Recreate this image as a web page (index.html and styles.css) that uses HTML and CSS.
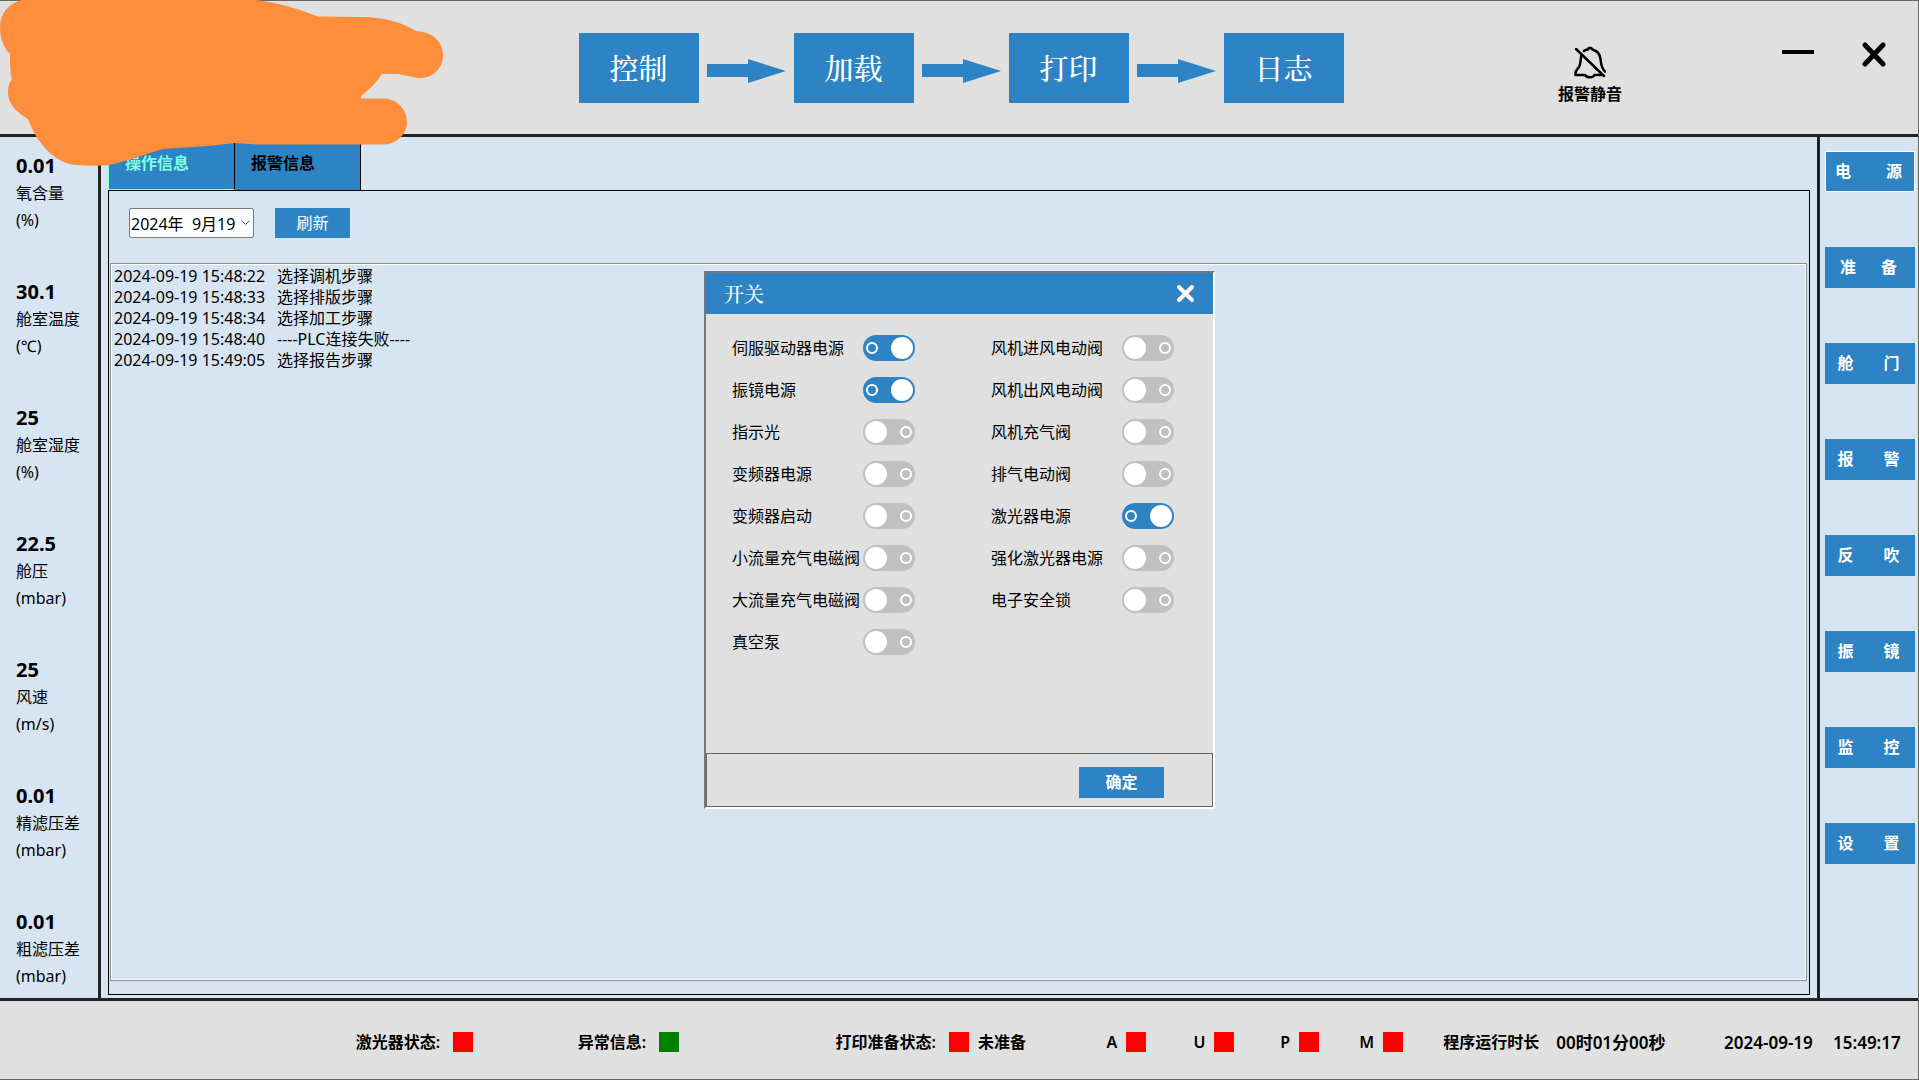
FILE: index.html
```html
<!DOCTYPE html>
<html lang="zh-CN">
<head>
<meta charset="utf-8">
<title>设备控制</title>
<link rel="stylesheet" href="styles.css">
</head>
<body>
<div class="app">
  <header class="header">
    <svg class="cover" width="444" height="167" viewBox="0 0 444 167" aria-hidden="true">
      <path d="M22 0C8 3 0 14 0 27C0 39 4 48 10 54C10 64 10 73 12 79C8 84 8 89 8 94C9 106 18 113 28 119C36 141 53 163 76 165C88 166 101 166 109 165C124 162 143 155 163 149L208 146L235 143L258 144.500L384 144.500C397 144 407 134 407 122C407 109 397 99 384 98.500L361 98.500V96C370 89 377 82 382 74L398 74L418 78C432 79 443 69 443 55C443 42 433 32 416 31C401 22 384 17 361 17L318 16.500C299 9 279 3 256 0Z"/>
    </svg>
    <nav class="steps">
      <button class="step" type="button">控制</button>
      <svg class="arrow" width="79" height="24" viewBox="0 0 79 24" aria-hidden="true"><path d="M0 5H41V0L79 12L41 24V18H0Z"/></svg>
      <button class="step" type="button">加载</button>
      <svg class="arrow" width="79" height="24" viewBox="0 0 79 24" aria-hidden="true"><path d="M0 5H41V0L79 12L41 24V18H0Z"/></svg>
      <button class="step" type="button">打印</button>
      <svg class="arrow" width="79" height="24" viewBox="0 0 79 24" aria-hidden="true"><path d="M0 5H41V0L79 12L41 24V18H0Z"/></svg>
      <button class="step" type="button">日志</button>
    </nav>
    <div class="tools">
      <button class="mute" type="button">
        <svg width="32" height="33" viewBox="0 0 32 33" fill="none" stroke="#000" stroke-width="2.500" stroke-linecap="round" stroke-linejoin="round" aria-hidden="true">
          <path d="M2 3L30 30"/>
          <path d="M10 5C11 4 12 4 13.500 3.500L15 2H17L18.500 3.500C24 5 26 8 26.500 13C27 19 28 23 31 25.500"/>
          <path d="M7.500 9C6.500 12 7 16 5.500 20C4 23 1.500 24 1.500 27V29H11C13 32 19 32 20.500 29H27"/>
        </svg>
        <span>报警静音</span>
      </button>
      <button class="win" type="button" aria-label="最小化">
        <svg width="32" height="25" viewBox="0 0 32 25" aria-hidden="true"><path d="M0 8H32V12H0Z"/></svg>
      </button>
      <button class="win" type="button" aria-label="关闭">
        <svg width="24" height="25" viewBox="0 0 24 25" fill="none" stroke="#000" stroke-width="5" stroke-linecap="round" aria-hidden="true"><path d="M3 3L21 22M21 3L3 22"/></svg>
      </button>
    </div>
  </header>

  <div class="body">
    <aside class="metrics">
      <div class="metric"><strong>0.01</strong><span>氧含量</span><span>(%)</span></div>
      <div class="metric"><strong>30.1</strong><span>舱室温度</span><span>(℃)</span></div>
      <div class="metric"><strong>25</strong><span>舱室湿度</span><span>(%)</span></div>
      <div class="metric"><strong>22.5</strong><span>舱压</span><span>(mbar)</span></div>
      <div class="metric"><strong>25</strong><span>风速</span><span>(m/s)</span></div>
      <div class="metric"><strong>0.01</strong><span>精滤压差</span><span>(mbar)</span></div>
      <div class="metric"><strong>0.01</strong><span>粗滤压差</span><span>(mbar)</span></div>
    </aside>

    <main class="main">
      <div class="tabs" role="tablist">
        <button class="tab tab-active" type="button" role="tab" aria-selected="true">操作信息</button>
        <button class="tab" type="button" role="tab" aria-selected="false">报警信息</button>
      </div>
      <section class="panel">
        <div class="filter">
          <div class="date">
            <select class="date-select" aria-label="日期"><option>2024年&nbsp; 9月19</option></select>
            <svg class="chevron" width="9" height="6" viewBox="0 0 9 6" fill="none" stroke="#555" aria-hidden="true"><path d="M0.500 0.500L4.500 4.500L8.500 0.500"/></svg>
          </div>
          <button class="refresh" type="button">刷新</button>
        </div>
        <ul class="log">
          <li><time>2024-09-19 15:48:22</time><span>选择调机步骤</span></li>
          <li><time>2024-09-19 15:48:33</time><span>选择排版步骤</span></li>
          <li><time>2024-09-19 15:48:34</time><span>选择加工步骤</span></li>
          <li><time>2024-09-19 15:48:40</time><span>----PLC连接失败----</span></li>
          <li><time>2024-09-19 15:49:05</time><span>选择报告步骤</span></li>
        </ul>
      </section>
    </main>

    <nav class="side">
      <button class="side-btn side-focus" type="button"><span>电</span><span>源</span></button>
      <button class="side-btn side-near" type="button"><span>准</span><span>备</span></button>
      <button class="side-btn" type="button"><span>舱</span><span>门</span></button>
      <button class="side-btn" type="button"><span>报</span><span>警</span></button>
      <button class="side-btn" type="button"><span>反</span><span>吹</span></button>
      <button class="side-btn" type="button"><span>振</span><span>镜</span></button>
      <button class="side-btn" type="button"><span>监</span><span>控</span></button>
      <button class="side-btn" type="button"><span>设</span><span>置</span></button>
    </nav>
  </div>

  <footer class="status">
    <div class="state state-first"><span class="name">激光器状态:</span><i class="lamp"></i></div>
    <div class="state"><span class="name">异常信息:</span><i class="lamp lamp-ok"></i></div>
    <div class="state"><span class="name">打印准备状态:</span><i class="lamp"></i>未准备</div>
    <div class="state">A<i class="lamp"></i></div>
    <div class="state">U<i class="lamp"></i></div>
    <div class="state">P<i class="lamp"></i></div>
    <div class="state">M<i class="lamp"></i></div>
    <div class="state">程序运行时长</div>
    <div class="state clock">00时01分00秒</div>
    <div class="state clock">2024-09-19</div>
    <div class="state clock">15:49:17</div>
  </footer>
</div>

<div class="overlay">
  <section class="dialog" role="dialog" aria-labelledby="dialog-title">
    <header class="dialog-head">
      <h2 class="dialog-title" id="dialog-title">开关</h2>
      <button class="dialog-close" type="button" aria-label="关闭">
        <svg width="19" height="19" viewBox="0 0 19 19" fill="none" stroke="#fff" stroke-width="4" stroke-linecap="round" aria-hidden="true"><path d="M3 3L16 16M16 3L3 16"/></svg>
      </button>
    </header>
    <div class="switches">
      <div class="switch-col">
        <label class="switch-row"><span>伺服驱动器电源</span><input class="switch" type="checkbox" checked></label>
        <label class="switch-row"><span>振镜电源</span><input class="switch" type="checkbox" checked></label>
        <label class="switch-row"><span>指示光</span><input class="switch" type="checkbox"></label>
        <label class="switch-row"><span>变频器电源</span><input class="switch" type="checkbox"></label>
        <label class="switch-row"><span>变频器启动</span><input class="switch" type="checkbox"></label>
        <label class="switch-row"><span>小流量充气电磁阀</span><input class="switch" type="checkbox"></label>
        <label class="switch-row"><span>大流量充气电磁阀</span><input class="switch" type="checkbox"></label>
        <label class="switch-row"><span>真空泵</span><input class="switch" type="checkbox"></label>
      </div>
      <div class="switch-col">
        <label class="switch-row"><span>风机进风电动阀</span><input class="switch" type="checkbox"></label>
        <label class="switch-row"><span>风机出风电动阀</span><input class="switch" type="checkbox"></label>
        <label class="switch-row"><span>风机充气阀</span><input class="switch" type="checkbox"></label>
        <label class="switch-row"><span>排气电动阀</span><input class="switch" type="checkbox"></label>
        <label class="switch-row"><span>激光器电源</span><input class="switch" type="checkbox" checked></label>
        <label class="switch-row"><span>强化激光器电源</span><input class="switch" type="checkbox"></label>
        <label class="switch-row"><span>电子安全锁</span><input class="switch" type="checkbox"></label>
      </div>
    </div>
    <footer class="dialog-foot">
      <button class="confirm" type="button">确定</button>
    </footer>
  </section>
</div>
</body>
</html>
```
FILE: styles.css
```css
:root {
  --blue: #2e83c4;
  --pale: #d7e5f2;
  --grey: #e0e0e0;
  --line: #666;
  --sans: "Noto Sans", "Noto Sans CJK SC", sans-serif;
  --song: "Noto Serif CJK SC", "Noto Sans CJK SC", serif;
}

*,
*::before,
*::after {
  box-sizing: border-box;
}

body {
  margin: 0;
  font: 16px/21px var(--sans);
  color: #000;
  background: var(--pale);
}

button {
  margin: 0;
  padding: 0;
  border: 0;
  background: none;
  color: inherit;
  font: inherit;
  cursor: pointer;
}

.app {
  display: flex;
  flex-direction: column;
  min-height: 100vh;
  border: 1px solid var(--line);
  border-left: 0;
}

/* Header */
.header {
  position: relative;
  display: grid;
  grid-template-columns: 1fr auto 1fr;
  height: 136px;
  background: var(--grey);
  border-bottom: 3px solid #222;
}

.cover {
  position: absolute;
  left: 0;
  top: -1px;
  z-index: 1;
  fill: #ff8e3c;
}

.steps {
  grid-column: 2;
  display: flex;
  align-items: center;
  gap: 8px;
  height: 70px;
  margin-top: 32px;
  padding-left: 4px;
}

.step {
  width: 120px;
  height: 70px;
  background: var(--blue);
  color: #fff;
  font: 500 29px/70px var(--song);
}

.arrow {
  margin-top: 6px;
  fill: var(--blue);
}

.tools {
  display: flex;
  justify-content: flex-end;
  align-items: flex-start;
  gap: 48px;
  padding: 41px 32px 0 0;
}

.mute {
  display: flex;
  flex-direction: column;
  align-items: center;
  gap: 5px;
  margin: 4px 112px 0 0;
  font-weight: 600;
}

.win svg {
  display: block;
}

/* Body */
.body {
  flex: 1;
  display: flex;
}

.metrics {
  display: flex;
  flex-direction: column;
  gap: 44px;
  width: 101px;
  padding: 15px 0 0 16px;
  border-right: 3px solid #222;
}

.metric {
  display: flex;
  flex-direction: column;
  line-height: 27px;
}

.metric strong {
  font-size: 20px;
  line-height: 28px;
}

.main {
  flex: 1;
  display: flex;
  flex-direction: column;
  min-width: 0;
  padding: 0 7px 3px;
}

.tabs {
  display: flex;
  height: 53px;
}

.tab {
  width: 126px;
  padding-left: 16px;
  background: var(--blue);
  border-right: 1px solid #000;
  font-weight: 600;
  text-align: left;
}

.tab-active {
  width: 127px;
  border-left: 1px solid #7fffe0;
  border-bottom: 1px solid #7fffe0;
  color: #7fffe0;
}

.panel {
  flex: 1;
  display: flex;
  flex-direction: column;
  padding: 0 2px 13px 1px;
  border: 1px solid #000;
}

.filter {
  display: flex;
  gap: 21px;
  height: 72px;
  padding: 17px 19px 0;
}

.date {
  position: relative;
  width: 125px;
  height: 30px;
}

.date-select {
  width: 100%;
  height: 30px;
  padding: 2px 1px 0;
  border: 1px solid #7a7a7a;
  border-radius: 2px;
  background: #fff;
  color: #000;
  font: inherit;
  appearance: none;
}

.chevron {
  position: absolute;
  right: 4px;
  top: 12px;
  pointer-events: none;
}

.refresh {
  width: 75px;
  height: 30px;
  background: var(--blue);
  color: #fff;
}

.log {
  flex: 1;
  margin: 0;
  padding: 2px 3px;
  border: 1px solid #8a8f94;
  box-shadow: inset 0 0 0 1px #fff;
  list-style: none;
}

.log time {
  display: inline-block;
  min-width: 163px;
}

.side {
  display: flex;
  flex-direction: column;
  gap: 55px;
  width: 101px;
  padding: 14px 3px 0 5px;
  border-left: 3px solid #222;
}

.side-btn {
  display: flex;
  justify-content: center;
  align-items: center;
  gap: 30px;
  width: 90px;
  height: 41px;
  padding-right: 3px;
  background: var(--blue);
  color: #fff;
  font-weight: 600;
}

.side-focus {
  gap: 35px;
  border: 1px solid #fff;
}

.side-near {
  gap: 25px;
}

/* Status bar */
.status {
  display: grid;
  grid-template-columns: 356fr 222fr 258fr 271fr 87fr 87fr 79fr 84fr 113fr 168fr 109fr 85fr;
  align-items: center;
  height: 81px;
  padding-top: 4px;
  background: var(--grey);
  border-top: 3px solid #222;
  font-weight: 600;
  white-space: nowrap;
}

.state {
  display: flex;
  align-items: center;
  gap: 9px;
}

.state-first {
  grid-column: 2;
}

.name {
  padding-right: 4px;
}

.clock {
  font-size: 17px;
}

.lamp {
  width: 20px;
  height: 20px;
  background: #f00;
}

.lamp-ok {
  background: #008000;
}

/* Switch dialog */
.overlay {
  position: fixed;
  inset: 0;
  display: grid;
  place-items: center;
}

.dialog {
  width: 511px;
  background: var(--grey);
  border: 2px solid #fff;
  border-top-color: #777;
  border-left-color: #777;
}

.dialog-head {
  display: flex;
  justify-content: space-between;
  align-items: center;
  height: 41px;
  padding: 0 18px;
  background: var(--blue);
}

.dialog-title {
  margin: 0;
  color: #fff;
  font: 500 20px/41px var(--song);
}

.dialog-close svg {
  display: block;
}

.switches {
  display: flex;
  gap: 76px;
  min-height: 439px;
  padding: 13px 26px;
}

.switch-col {
  width: 183px;
}

.switch-row {
  display: flex;
  justify-content: space-between;
  align-items: center;
  height: 42px;
  white-space: nowrap;
}

.switch {
  position: relative;
  flex: none;
  width: 52px;
  height: 26px;
  margin: 0;
  border-radius: 13px;
  background: #c0c0c0;
  appearance: none;
}

.switch::before,
.switch::after {
  content: "";
  position: absolute;
  border-radius: 50%;
}

.switch::before {
  left: 2px;
  top: 2px;
  width: 22px;
  height: 22px;
  background: #fff;
}

.switch::after {
  right: 3px;
  top: 7px;
  width: 12px;
  height: 12px;
  border: 2px solid #fff;
}

.switch:checked {
  background: var(--blue);
}

.switch:checked::before {
  left: 28px;
}

.switch:checked::after {
  right: 37px;
}

.dialog-foot {
  display: flex;
  justify-content: flex-end;
  align-items: center;
  height: 54px;
  padding: 4px 48px 0 0;
  border: 1px solid var(--line);
}

.confirm {
  width: 85px;
  height: 31px;
  background: var(--blue);
  color: #fff;
  font-weight: 600;
}
```
